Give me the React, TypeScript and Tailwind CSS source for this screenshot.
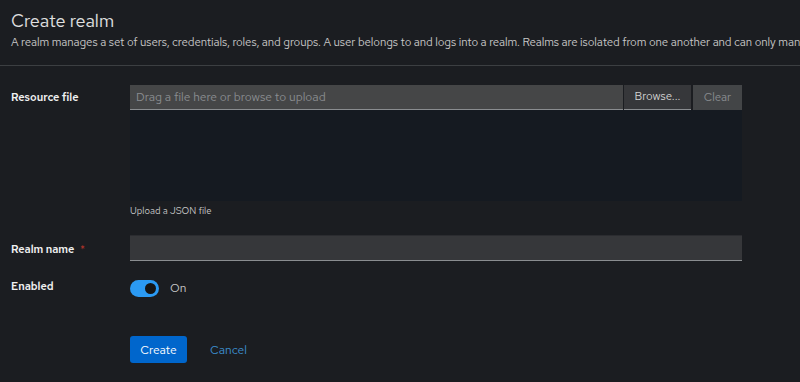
import React, { useState } from 'react';

const font = { fontFamily: '"Red Hat Text", Inter, "Noto Sans", sans-serif' };

export default function App() {
	const [enabled, setEnabled] = useState(true);

	return (
		<div className="w-[800px] h-[382px] overflow-hidden bg-[#1b1d21] text-[#e0e0e0]" style={font}>
			<div className="h-[66px] pl-[11px] pt-[9px] border-b border-[#3c3f42] whitespace-nowrap overflow-hidden">
				<h1 className="text-[18px] leading-[24px] text-[#e0e0e0]">Create realm</h1>
				<p className="mt-[1px] text-[11.5px] leading-[16px] tracking-[-0.08px] text-[#c7c7c7]">
					A realm manages a set of users, credentials, roles, and groups. A user belongs to and logs into a realm. Realms are isolated from one another and can only manage and authenticate the users that they control.
				</p>
			</div>

			<div className="pl-[11px] pt-[19px]">
				<div className="flex">
					<label className="w-[119px] pt-[5px] text-[11px] font-semibold leading-[14px] text-[#f0f0f0]">Resource file</label>
					<div className="w-[612px]">
						<div className="flex h-[25px]">
							<div className="flex-1 flex items-center px-[6px] bg-[#454647] border-b border-[#8a8d90] text-[12px] text-[#8a8d90]">
								Drag a file here or browse to upload
							</div>
							<button className="ml-px w-[67px] bg-[#36373a] border-b border-[#8a8d90] text-[11.5px] text-[#d2d2d2]">Browse...</button>
							<button className="ml-[2px] w-[49px] bg-[#434547] text-[11.5px] text-[#8a8d90]">Clear</button>
						</div>
						<div className="h-[91px] bg-[#151a21]" />
						<div className="mt-[4px] text-[9.5px] leading-[12px] text-[#c7c7c7]">Upload a JSON file</div>
					</div>
				</div>

				<div className="flex mt-[18px]">
					<label className="w-[119px] pt-[7px] text-[11px] font-semibold leading-[14px] text-[#f0f0f0]">
						Realm name <span className="ml-[3px] text-[#b0332a] font-normal">*</span>
					</label>
					<div className="w-[612px] h-[26px] bg-[#36373a] border-t border-[#2b2c30] border-b border-b-[#8a8d90]" />
				</div>

				<div className="flex mt-[18px]">
					<label className="w-[119px] text-[11px] font-semibold leading-[14px] text-[#f0f0f0]">Enabled</label>
					<div className="flex items-center">
						<button
							onClick={() => setEnabled(!enabled)}
							className="relative w-[29px] h-[17px] rounded-full bg-[#2b9af3]"
						>
							<span className="absolute right-[3px] top-[3px] w-[11px] h-[11px] rounded-full bg-[#151515]" />
						</button>
						<span className="ml-[11px] text-[12px] text-[#c7c7c7]">{enabled ? 'On' : 'Off'}</span>
					</div>
				</div>

				<div className="flex mt-[39px] pl-[119px] items-center">
					<button className="w-[57px] h-[27px] rounded-[3px] bg-[#0066cc] text-[12px] text-white">Create</button>
					<button className="ml-[23px] text-[12px] text-[#3b8fcf]">Cancel</button>
				</div>
			</div>
		</div>
	);
}
